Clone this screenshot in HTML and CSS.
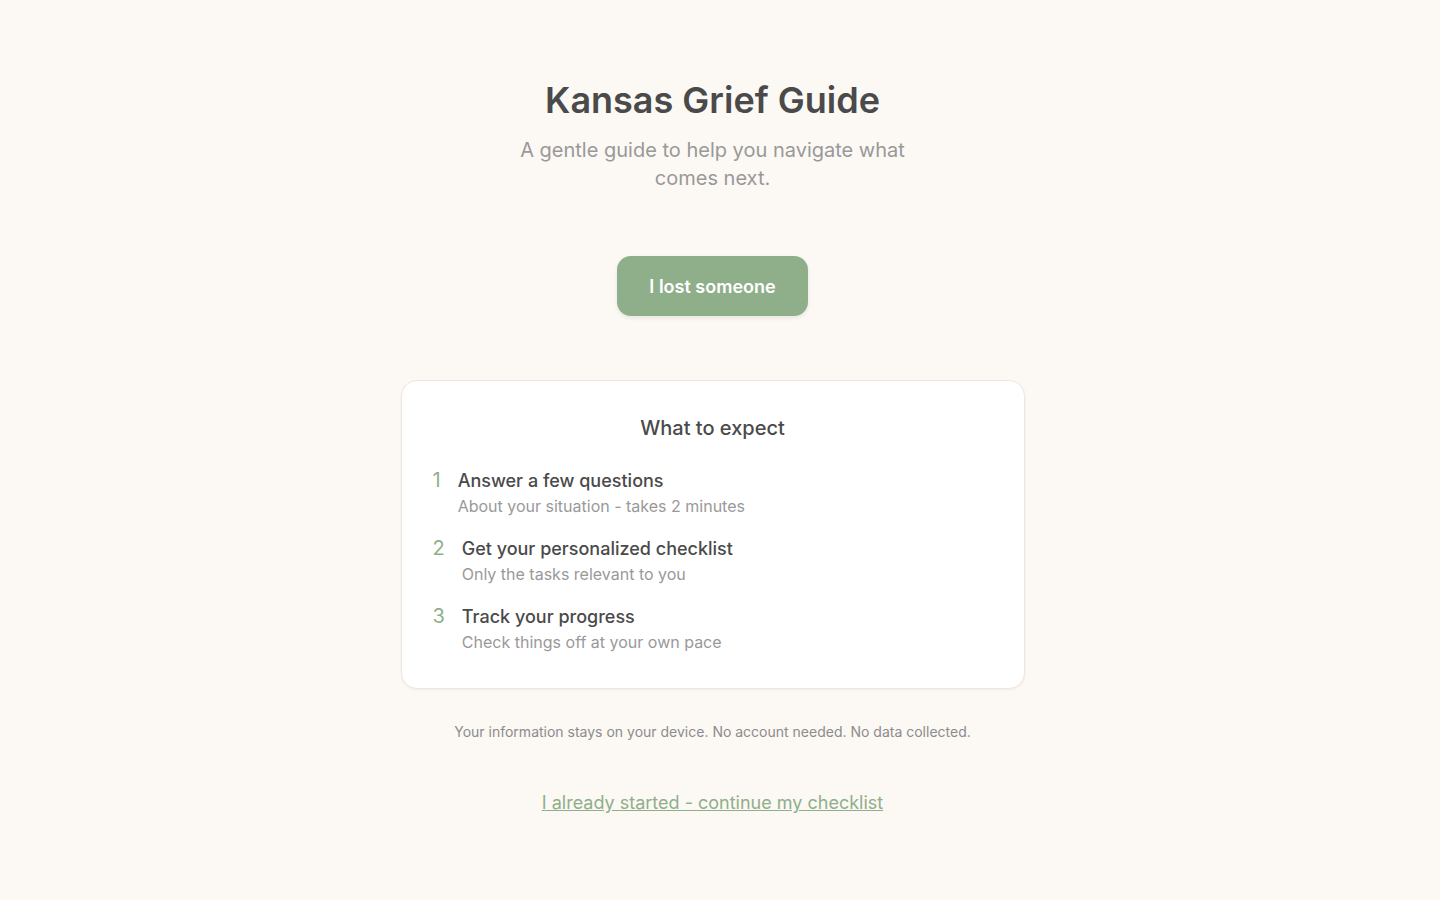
FILE: index.html
```html
<!DOCTYPE html>
<html lang="en">
<head>
	<meta charset="UTF-8">
	<meta name="viewport" content="width=device-width, initial-scale=1.0">
	<title>Kansas Grief Guide</title>
	<link rel="stylesheet" href="styles.css">
</head>
<body>
	<main class="welcome">
		<h1 class="title">Kansas Grief Guide</h1>
		<p class="subtitle">A gentle guide to help you navigate what comes next.</p>

		<button class="start-btn">I lost someone</button>

		<section class="expect">
			<h2 class="expect-title">What to expect</h2>
			<ol class="steps">
				<li class="step">
					<span class="step-num">1</span>
					<div class="step-body">
						<div class="step-title">Answer a few questions</div>
						<div class="step-desc">About your situation - takes 2 minutes</div>
					</div>
				</li>
				<li class="step">
					<span class="step-num">2</span>
					<div class="step-body">
						<div class="step-title">Get your personalized checklist</div>
						<div class="step-desc">Only the tasks relevant to you</div>
					</div>
				</li>
				<li class="step">
					<span class="step-num">3</span>
					<div class="step-body">
						<div class="step-title">Track your progress</div>
						<div class="step-desc">Check things off at your own pace</div>
					</div>
				</li>
			</ol>
		</section>

		<p class="privacy">Your information stays on your device. No account needed. No data collected.</p>

		<a href="#" class="continue">I already started - continue my checklist</a>
	</main>
</body>
</html>
```

FILE: styles.css
```css
*{
	box-sizing: border-box;
}
html{
	overflow-y: scroll;
}
body{
	margin: 0;
	background: #fcf8f4;
	font-family: Inter, "Noto Sans", sans-serif;
	color: #4a4a4a;
}
.welcome{
	display: flex;
	flex-direction: column;
	align-items: center;
	text-align: center;
	padding: 79px 39px 136px 24px;
}
.title{
	margin: 0 0 14px;
	font-size: 36px;
	line-height: 1.2;
	font-weight: 600;
	color: #4a4a4a;
}
.subtitle{
	margin: 0;
	max-width: 400px;
	font-size: 20px;
	line-height: 28px;
	color: #999;
}
.start-btn{
	margin-top: 64px;
	height: 60px;
	padding: 0 32px;
	border: none;
	border-radius: 14px;
	background: #8faf8b;
	color: #fff;
	font-family: inherit;
	font-size: 18px;
	font-weight: 600;
	box-shadow: 0 2px 4px rgba(0,0,0,0.08);
	cursor: pointer;
}
.expect{
	margin-top: 64px;
	width: 624px;
	background: #fff;
	border: 1px solid #efe7df;
	border-radius: 16px;
	padding: 32px 31px 34px;
	box-shadow: 0 1px 3px rgba(0,0,0,0.05);
	text-align: left;
}
.expect-title{
	margin: 0 0 24px;
	text-align: center;
	font-size: 20px;
	line-height: 30px;
	font-weight: 500;
	color: #4a4a4a;
}
.steps{
	list-style: none;
	margin: 0;
	padding: 0;
	display: flex;
	flex-direction: column;
	gap: 17px;
}
.step{
	display: flex;
	gap: 17px;
}
.step-num{
	font-size: 20px;
	line-height: 27px;
	color: #8faf8b;
}
.step-title{
	font-size: 18px;
	line-height: 27px;
	font-weight: 500;
	color: #4a4a4a;
}
.step-desc{
	font-size: 16px;
	line-height: 24px;
	color: #999;
}
.privacy{
	margin: 32px 0 0;
	font-size: 14px;
	line-height: 21px;
	color: #8c8c8c;
}
.continue{
	margin-top: 47px;
	font-size: 18px;
	line-height: 27px;
	color: #8faf8b;
	text-decoration: underline;
}
```
